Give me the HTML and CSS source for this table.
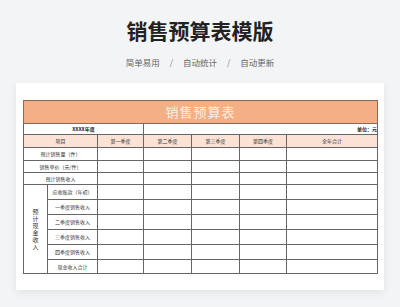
FILE: index.html
```html
<!DOCTYPE html>
<html lang="zh-CN">
<head>
    <meta charset="UTF-8">
    <meta name="viewport" content="width=device-width, initial-scale=1.0">
    <title>销售预算表模版</title>
    <link rel="stylesheet" href="styles.css">
</head>
<body>
    <header class="page_head">
        <h1 class="page_title">销售预算表模版</h1>
        <ul class="tag_list">
            <li>简单易用</li>
            <li class="sep">/</li>
            <li>自动统计</li>
            <li class="sep">/</li>
            <li>自动更新</li>
        </ul>
    </header>

    <main class="sheet_card">
        <table class="budget_table">
            <colgroup>
                <col style="width: 24px">
                <col style="width: 50px">
                <col style="width: 46px">
                <col style="width: 48px">
                <col style="width: 48px">
                <col style="width: 47px">
                <col style="width: 91px">
            </colgroup>
            <tr class="row_title">
                <td colspan="7">销售预算表</td>
            </tr>
            <tr class="row_year">
                <td colspan="3" class="year_cell">XXXX年度</td>
                <td colspan="4" class="unit_cell">单位：元</td>
            </tr>
            <tr class="row_head">
                <td colspan="2">项目</td>
                <td>第一季度</td>
                <td>第二季度</td>
                <td>第三季度</td>
                <td>第四季度</td>
                <td>全年合计</td>
            </tr>
            <tr class="row_a">
                <td colspan="2">预计销售量（件）</td>
                <td></td><td></td><td></td><td></td><td></td>
            </tr>
            <tr class="row_b">
                <td colspan="2">销售单价（元/件）</td>
                <td></td><td></td><td></td><td></td><td></td>
            </tr>
            <tr class="row_b">
                <td colspan="2">预计销售收入</td>
                <td></td><td></td><td></td><td></td><td></td>
            </tr>
            <tr class="row_c">
                <td rowspan="6" class="vert_cell"><span>预计现金收入</span></td>
                <td>应收账款（年初）</td>
                <td></td><td></td><td></td><td></td><td></td>
            </tr>
            <tr class="row_c">
                <td>一季度销售收入</td>
                <td></td><td></td><td></td><td></td><td></td>
            </tr>
            <tr class="row_c">
                <td>二季度销售收入</td>
                <td></td><td></td><td></td><td></td><td></td>
            </tr>
            <tr class="row_c">
                <td>三季度销售收入</td>
                <td></td><td></td><td></td><td></td><td></td>
            </tr>
            <tr class="row_c">
                <td>四季度销售收入</td>
                <td></td><td></td><td></td><td></td><td></td>
            </tr>
            <tr class="row_d">
                <td>现金收入合计</td>
                <td></td><td></td><td></td><td></td><td></td>
            </tr>
        </table>
    </main>
</body>
</html>
```

FILE: styles.css
```css
/* General */
*{
    box-sizing: border-box;
}
html, body{
    margin: 0px;
    padding: 0px;
}
body{
    width: 400px;
    height: 307px;
    overflow: hidden;
    background-color: #f3f4f6;
    font-family: "Noto Sans CJK SC", "Noto Sans", sans-serif;
}

/* Header */
.page_head{
    display: flex;
    flex-direction: column;
    align-items: center;
}
.page_title{
    margin: 16px 0px 0px 0px;
    font-size: 21px;
    line-height: 28px;
    font-weight: 700;
    color: #222222;
}
.tag_list{
    list-style: none;
    display: flex;
    gap: 10px;
    margin: 10px 0px 0px 0px;
    padding: 0px;
    font-size: 8.5px;
    line-height: 16px;
    color: #666666;
}
.tag_list .sep{
    color: #888888;
}

/* Card */
.sheet_card{
    width: 368px;
    height: 207px;
    margin: 13px 0px 0px 16px;
    padding: 17px 7px;
    background-color: white;
    box-shadow: 0px 3px 8px rgba(0, 0, 0, 0.07);
}

/* Table */
.budget_table{
    table-layout: fixed;
    width: 354px;
    border-collapse: collapse;
    border: 1px solid #555555;
}
.budget_table td{
    border: 1px solid #666666;
    padding: 0px;
    text-align: center;
    font-size: 5px;
    line-height: 6px;
    color: #333333;
    white-space: nowrap;
    overflow: hidden;
}
.row_title td{
    height: 23px;
    background-color: #f4b084;
    border-color: #8a6a5a;
    color: #fbeee6;
    font-size: 13px;
    line-height: 16px;
    letter-spacing: 1px;
}
.row_year td{
    height: 11px;
    font-weight: 700;
    color: #222222;
}
.row_year .unit_cell{
    text-align: right;
    border-left-color: #666666;
}
.row_head td{
    height: 13px;
    background-color: #fbe2d5;
}
.row_a td{
    height: 13px;
}
.row_b td{
    height: 12px;
}
.row_c td{
    height: 15px;
}
.row_d td{
    height: 14px;
}
.vert_cell span{
    display: inline-block;
    width: 6px;
    font-size: 6px;
    line-height: 7px;
    white-space: normal;
    word-break: break-all;
}
```
